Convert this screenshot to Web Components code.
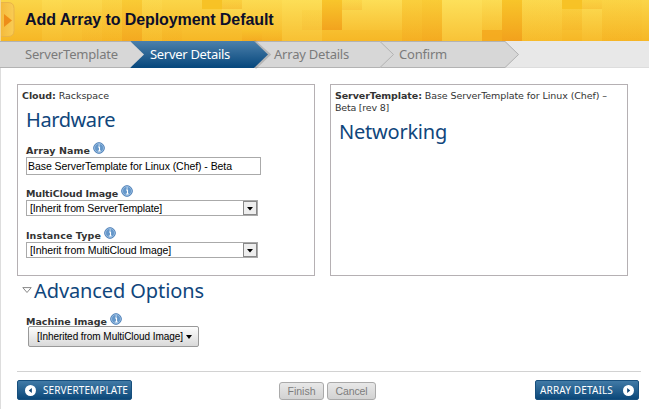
<!DOCTYPE html>
<html lang="en">
<head>
<meta charset="utf-8">
<title>Add Array to Deployment Default</title>
<style>
html,body{margin:0;height:100%;background:#fff;overflow:hidden}
body{font-family:"Noto Sans","Open Sans",sans-serif;color:#333}
</style>
</head>
<body>
<wizard-page></wizard-page>
<script>
const define=(name,css,html,after)=>{
  const t=document.createElement('template');
  t.innerHTML=`<style>:host{display:block;box-sizing:border-box}*{box-sizing:border-box}${css}</style>${html}`;
  customElements.define(name,class extends HTMLElement{
    connectedCallback(){
      if(this.shadowRoot)return;
      this.attachShadow({mode:'open'}).append(t.content.cloneNode(true));
      if(after)after(this,this.shadowRoot);
    }
  });
};

/* One line of text, tracked so that it spans the width given in "w". */
define('fit-text',':host{display:inline-block;white-space:pre}span{display:inline-block}','<span><slot></slot></span>',(h,r)=>{
  const s=r.querySelector('span'),w=+h.getAttribute('w'),n=h.textContent.length;
  s.style.letterSpacing=((w-s.getBoundingClientRect().width)/n)+'px';
});

define('info-icon',':host{display:block;width:12px;height:12px}svg{display:block}',
`<svg width="12" height="12" viewBox="0 0 12 12"><circle cx="6" cy="6" r="5.3" fill="#6497ca" stroke="#4a7db5" stroke-width="1"/><circle cx="6" cy="6" r="4.500" fill="none" stroke="#a9c9e8" stroke-width=".7"/><path d="M5 5h1.500v4M4.800 9h3M5.500 3h1.300" fill="none" stroke="#fff" stroke-width="1.100"/></svg>`);

define('title-bar',`:host{height:41px;display:grid}svg,h1{grid-area:1/1}h1{margin:0;padding:10px 0 0 25px;font:bold 16px/20px "Liberation Sans",Arial,sans-serif;letter-spacing:-.08px;color:#0c0f2b}svg{display:block}`,
`<svg width="649" height="41"><defs>
<linearGradient id="g" x2="0" y2="1"><stop stop-color="#fbd548"/><stop offset="1" stop-color="#f6b726"/></linearGradient>
<linearGradient id="l" x2="0" y2="1"><stop stop-color="#fde05a"/><stop offset="1" stop-color="#f8c337"/></linearGradient>
<linearGradient id="d" x2="0" y2="1"><stop stop-color="#f8c428"/><stop offset="1" stop-color="#f2a01c"/></linearGradient>
<linearGradient id="k" x2="1"><stop stop-color="#f4b93a"/><stop offset="1" stop-color="#f9cc55"/></linearGradient></defs>
<rect width="649" height="41" fill="url(#g)"/><g class="tiles"></g>
<path d="M0 2.500h8q6 0 6 6v22q0 6-6 6H0z" fill="url(#k)" stroke="#e9b448"/><path d="M4 14l8 6.500-8 6.500z" fill="#ee8d18"/><path d="M.5 0v41" stroke="#f3d795"/>
</svg><h1><slot></slot></h1>`,(h,r)=>{
  const tiles=[[42,0,20,41,'l',.5],[62,0,40,41,'l',.35],[82,12,20,29,'d',.15],[102,0,20,41,'d',.1],[122,0,20,41,'d',.6],[142,0,20,41,'l',.3],[162,10,20,31,'d',.15],
  [202,0,20,9,'#f6c022',.9],[222,0,20,9,'d',.25],[222,9,20,20,'l',.5],[242,0,40,30,'l',.5],[242,30,20,11,'d',.5],[262,30,20,11,'d',.25],[282,0,40,41,'l',.8],[302,10,20,20,'d',.15],
  [322,0,20,30,'d',.9],[342,0,60,30,'l',.8],[342,0,20,10,'d',.25],[402,0,20,41,'d',.35],[422,0,20,41,'d',.55],[442,0,40,41,'l',1],[482,0,20,30,'l',.6],[482,30,20,11,'#f4a81e',.8],[502,0,20,41,'d',.95],
  [522,0,40,41,'l',.3],[562,0,20,9,'#f6c022',.9],[562,9,20,21,'d',.15],[582,0,20,9,'d',.2],[582,9,20,32,'l',.4],[602,0,40,41,'d',.1]];
  r.querySelector('.tiles').innerHTML=tiles.map(([x,y,w,hh,c,o])=>`<rect x="${x}" y="${y}" width="${w}" height="${hh}" fill="${c[0]==='#'?c:`url(#${c})`}" opacity="${o}"/>`).join('');
});

/* Background of one step: a bar that ends in an arrow head. */
define('step-shape',`svg{display:block;overflow:visible}`,'<svg height="27"></svg>',(h,r)=>{
  const w=+h.getAttribute('w'),s=r.querySelector('svg'),on=h.hasAttribute('active');
  s.setAttribute('width',w+14);
  s.innerHTML=`<defs><linearGradient id="b" x2="0" y2="1"><stop stop-color="#4c80ab"/><stop offset="1" stop-color="#06477c"/></linearGradient></defs>
  ${on?`<path d="M${w} 0l15 13.500-14 13.500" fill="none" stroke="#777" stroke-opacity=".35" stroke-width="3"/>`:''}
  <path d="M0 0H${w}L${w+14} 13.500 ${w} 27H0z" fill="${on?'url(#b)':'#d7d7d7'}"/>
  ${on?'':`<path d="M0 .5H${w}${h.hasAttribute('flat')?'':`L${w+13.5} 13.500 ${w} 26.500`}M0 26.500H${w}" fill="none" stroke="#b3b3b3"/>`}`;
});

define('wizard-nav',`:host{height:27px;display:flex;background:#e8e8e8;border-bottom:1px solid #ddd;color:#7b7b7b}
.s{display:grid;flex:none;height:27px;margin-right:-14px;font-size:13px;line-height:27px}.s>*{grid-area:1/1}
.s:nth-of-type(1){z-index:4}.s:nth-of-type(2){z-index:3;color:#fff}.s:nth-of-type(3){z-index:2}.s fit-text{z-index:1}`,
`<div class="s"><step-shape w="130" flat></step-shape><fit-text w="93" style="margin-left:25px">ServerTemplate</fit-text></div>
<div class="s"><step-shape w="124" active></step-shape><fit-text w="80" style="margin-left:20px">Server Details</fit-text></div>
<div class="s"><step-shape w="126"></step-shape><fit-text w="75" style="margin-left:20px">Array Details</fit-text></div>
<div class="s"><step-shape w="125"></step-shape><fit-text w="48" style="margin-left:19px">Confirm</fit-text></div>`);

define('info-panel',`:host{width:298px;height:192px;border:1px solid #b5b0b3;padding:5px 4px 0;font:9.500px/12px "DejaVu Sans",sans-serif}::slotted(.line){display:block}`,'<slot></slot>');

define('section-title',`:host{font:20px/24px "Noto Sans","Open Sans",sans-serif;color:#10467c}`,'<slot></slot>');

define('text-field',`:host{width:235px;height:18px;border:1px solid #aaa;padding-left:1px;font:10.500px/16px "Liberation Sans",Arial,sans-serif;color:#000;background:#fff}`,'<slot></slot>');

define('select-field',`:host{display:flex;justify-content:space-between;width:232px;height:16px;border:1px solid #aaa;padding-left:3px;font:10.500px/14px "Liberation Sans",Arial,sans-serif;color:#000;background:#fff}
svg{display:block}`,`<slot></slot><svg width="14" height="14"><rect x=".5" y=".5" width="13" height="13" fill="#eee" stroke="#888"/><path d="M4 6h6l-3 3.500z" fill="#000"/></svg>`);

define('menu-button',`:host{display:flex;align-items:center;gap:3px;width:171px;height:21px;border:1px solid #999;border-radius:2px;padding-left:8px;background:linear-gradient(#fdfdfd,#d9d9d9);font:10px/19px "Liberation Sans",Arial,sans-serif;color:#000}`,
`<slot></slot><svg width="6" height="4"><path d="M0 0h6L3 4z"/></svg>`);

define('nav-button',`:host{display:flex;align-items:center;height:20px;border:1px solid #174f7d;border-radius:2px;background:linear-gradient(#417aa6,#0b4879);color:#fff;font-size:10px;line-height:18px}
svg{flex:none}:host([next]){flex-direction:row-reverse}:host([next]) path{transform:rotate(180deg);transform-origin:5.5px 5.5px}`,
`<svg width="11" height="11"><circle cx="5.500" cy="5.500" r="5.500" fill="#fff"/><path d="M6.800 3v5L3.800 5.500z" fill="#0b4272"/></svg><slot></slot>`);

define('plain-button',`:host{display:flex;justify-content:center;align-items:center;height:18px;border:1px solid #aaa;border-radius:3px;background:linear-gradient(#e8e8e8,#d2d2d2);color:#7c7c7c;font:10.500px/16px "Liberation Sans",Arial,sans-serif}`,'<slot></slot>');

define('wizard-page',`:host{width:649px;height:409px;display:flex;flex-direction:column}
main{flex:1;border-left:1px solid #ddd;padding:16px 0 0 16px}
.panels{display:flex;gap:15px}.field{margin-left:4px}
.label{display:flex;gap:3px;height:15px;font:bold 9.500px/12px "DejaVu Sans",sans-serif}.label fit-text{padding-top:3px}
.adv{display:flex;gap:2px;height:24px;padding:3px 0 0 5px}.adv svg{margin-top:8px}
footer{display:flex;margin-top:8px}`,
`<title-bar>Add Array to Deployment Default</title-bar><wizard-nav></wizard-nav>
<main><div class="panels">
<info-panel><fit-text class="line" w="87"><b>Cloud:</b> Rackspace</fit-text>
<section-title style="margin:6px 0 0 4px"><fit-text w="89">Hardware</fit-text></section-title>
<div class="field" style="margin-top:10px"><div class="label"><fit-text w="64">Array Name</fit-text><info-icon></info-icon></div><text-field><fit-text w="204">Base ServerTemplate for Linux (Chef) - Beta</fit-text></text-field></div>
<div class="field" style="margin-top:10px"><div class="label"><fit-text w="92">MultiCloud Image</fit-text><info-icon></info-icon></div><select-field><fit-text w="132">[Inherit from ServerTemplate]</fit-text></select-field></div>
<div class="field" style="margin-top:11px"><div class="label"><fit-text w="75">Instance Type</fit-text><info-icon></info-icon></div><select-field><fit-text w="141">[Inherit from MultiCloud Image]</fit-text></select-field></div>
</info-panel>
<info-panel><fit-text class="line" w="272"><b>ServerTemplate:</b> Base ServerTemplate for Linux (Chef) –</fit-text><fit-text class="line" w="54">Beta [rev 8]</fit-text>
<section-title style="margin:6px 0 0 4px"><fit-text w="108">Networking</fit-text></section-title></info-panel>
</div>
<div class="adv"><svg width="10" height="7"><path d="M.8.6h8.400L5 5.500z" fill="#fff" stroke="#888"/></svg><section-title><fit-text w="170">Advanced Options</fit-text></section-title></div>
<div class="label" style="margin:13px 0 0 9px"><fit-text w="81">Machine Image</fit-text><info-icon></info-icon></div>
<menu-button style="margin:-2px 0 0 11px"><fit-text w="146">[Inherited from MultiCloud Image]</fit-text></menu-button>
<div style="height:1px;width:624px;background:#d2d2d2;margin-top:24px"></div>
<footer><nav-button style="width:115px;padding-left:7px;gap:7px"><fit-text w="85">SERVERTEMPLATE</fit-text></nav-button>
<plain-button style="width:45px;margin:2px 3px 0 147px"><fit-text w="28">Finish</fit-text></plain-button><plain-button style="width:49px;margin-top:2px"><fit-text w="32">Cancel</fit-text></plain-button>
<nav-button next style="width:104px;margin-left:159px;gap:10px;justify-content:center"><fit-text w="73">ARRAY DETAILS</fit-text></nav-button></footer>
</main>`);
</script>
</body>
</html>
